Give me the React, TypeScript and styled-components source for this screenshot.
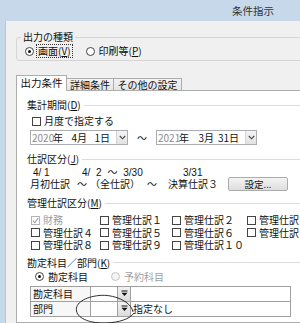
import React from 'react'
import styled, { createGlobalStyle } from 'styled-components'

const GlobalStyle = createGlobalStyle`
  * { box-sizing: border-box; }
  body { margin: 0; background: #f0f0f0; }
`

const Window = styled.div`
  position: relative;
  width: 300px;
  height: 323px;
  overflow: hidden;
  display: flex;
  flex-direction: column;
  background: #c7d8eb;
  font-family: 'Noto Sans CJK JP', 'Noto Sans', sans-serif;
  font-size: 10px;
  line-height: 12px;
  color: #111;
`
const TitleBar = styled.div`
  height: 21px;
  flex: none;
  padding: 5px 0 0 232px;
  font-size: 10.5px;
  color: #333;
`
const Body = styled.div`
  flex: 1;
  display: flex;
  min-height: 0;
`
const Frame = styled.div`
  width: 6px;
  flex: none;
  border-right: 1px solid #b5c6d8;
`
const Client = styled.div`
  flex: 1;
  min-width: 0;
  display: flex;
  flex-direction: column;
  background: #f0f0f0;
  padding: 10px 0 0 10px;
  overflow: hidden;
`
const Group = styled.fieldset`
  flex: none;
  width: 330px;
  margin: 0;
  padding: 0 0 3px 0;
  border: 1px solid #d5d5d5;
  border-radius: 3px;
`
const Legend = styled.legend`
  margin-left: 4px;
  padding: 0 2px;
  line-height: 12px;
`
const RadioRow = styled.div<{ $indent: number; $gap: number }>`
  display: flex;
  align-items: center;
  height: 12px;
  margin-top: 2px;
  padding-left: ${p => p.$indent}px;
  gap: ${p => p.$gap}px;
`
const Option = styled.label<{ $disabled?: boolean; $focus?: boolean }>`
  display: flex;
  align-items: center;
  gap: 3px;
  color: ${p => (p.$disabled ? '#a0a0a0' : '#111')};
  span.txt {
    padding: 0 1px;
    outline: ${p => (p.$focus ? '1px dotted #333' : 'none')};
  }
`
const Radio = styled.span<{ $checked?: boolean; $disabled?: boolean }>`
  width: 9px;
  height: 9px;
  flex: none;
  border-radius: 50%;
  border: 1px solid ${p => (p.$disabled ? '#c4c4c4' : '#444')};
  background: ${p => (p.$disabled ? '#f4f4f4' : '#fff')};
  display: flex;
  align-items: center;
  justify-content: center;
  &::after {
    content: '';
    width: 3px;
    height: 3px;
    border-radius: 50%;
    background: ${p => (p.$checked ? '#111' : 'transparent')};
  }
`
const U = styled.span`
  text-decoration: underline;
`
const TabRow = styled.div`
  flex: none;
  display: flex;
  align-items: flex-end;
  height: 16px;
  margin-top: 14px;
`
const Tab = styled.div<{ $active?: boolean; $w: number }>`
  width: ${p => p.$w}px;
  height: ${p => (p.$active ? 16 : 13)}px;
  border: 1px solid #acacac;
  border-bottom: none;
  margin-left: ${p => (p.$active ? 0 : -1)}px;
  text-align: center;
  line-height: ${p => (p.$active ? 14 : 12)}px;
  background: ${p => (p.$active ? '#fff' : 'linear-gradient(#f2f2f2, #e4e4e4)')};
  position: ${p => (p.$active ? 'relative' : 'static')};
  z-index: ${p => (p.$active ? 1 : 'auto')};
  font-size: ${p => (p.$active ? 10.5 : 10)}px;
`
const Panel = styled.div`
  flex: 1;
  width: 330px;
  margin-top: -1px;
  background: #fff;
  border: 1px solid #adadad;
  padding: 8px 0 0 10px;
`
const SectionHead = styled.div<{ $mt: number }>`
  display: flex;
  align-items: center;
  gap: 3px;
  height: 12px;
  margin-top: ${p => p.$mt}px;
  &::after {
    content: '';
    flex: 1;
    height: 1px;
    background: #dcdcdc;
  }
`
const CheckItem = styled.label<{ $disabled?: boolean }>`
  display: flex;
  align-items: center;
  gap: 3px;
  height: 12px;
  white-space: nowrap;
  color: ${p => (p.$disabled ? '#9a9a9a' : '#111')};
`
const Box = styled.span<{ $disabled?: boolean }>`
  width: 9px;
  height: 9px;
  flex: none;
  border: 1px solid ${p => (p.$disabled ? '#b4b4b4' : '#444')};
  background: #fff;
  display: flex;
  align-items: center;
  justify-content: center;
`
const MonthCheck = styled.div`
  margin: 4px 0 0 5px;
`
const DateRow = styled.div`
  display: flex;
  align-items: center;
  margin: 3px 0 0 3px;
  height: 15px;
`
const DateField = styled.div<{ $w: number }>`
  width: ${p => p.$w}px;
  height: 15px;
  display: flex;
  align-items: center;
  border: 1px solid #abadb3;
  background: #fff;
  padding-left: 1px;
`
const Year = styled.span`
  width: 21px;
  color: #8c8c8c;
`
const Cell = styled.span<{ $w: number }>`
  width: ${p => p.$w}px;
  text-align: right;
  white-space: nowrap;
`
const DropBtn = styled.span`
  margin-left: auto;
  width: 11px;
  height: 13px;
  border-left: 1px solid #d4d4d4;
  background: linear-gradient(#f4f4f4, #e2e2e2);
  display: flex;
  align-items: center;
  justify-content: center;
`
const Tilde = styled.span<{ $w: number }>`
  width: ${p => p.$w}px;
  text-align: center;
`
const RangeTop = styled.div`
  display: grid;
  grid-template-columns: 49px 101px auto;
  height: 9px;
  line-height: 10px;
  margin: 3px 0 0 6px;
  white-space: pre;
  font-family: 'Liberation Sans', 'Noto Sans CJK JP', sans-serif;
  font-size: 10px;
  span:nth-child(2) {
    word-spacing: 3px;
  }
`
const RangeRow = styled.div`
  display: grid;
  grid-template-columns: 47px 13px 57px 21px 60px 60px;
  align-items: center;
  height: 14px;
  margin-left: 3px;
  white-space: nowrap;
`
const Button = styled.button`
  height: 14px;
  width: 60px;
  padding: 0;
  font: inherit;
  font-size: 9.5px;
  line-height: 12px;
  color: #111;
  border: 1px solid #acacac;
  border-radius: 2px;
  background: linear-gradient(#f3f3f3, #dedede);
`
const CheckGrid = styled.div`
  display: grid;
  grid-template-columns: 69px 72px 75px 80px;
  grid-auto-rows: 12.5px;
  align-items: center;
  margin: 5px 0 0 4px;
`
const Table = styled.div`
  display: grid;
  grid-template-columns: 60px 27px 13px 160px;
  width: 261px;
  margin: 3px 0 0 3px;
  border-top: 1px solid #a0a0a0;
  border-left: 1px solid #a0a0a0;
`
const TCell = styled.div<{ $kind?: 'label' | 'input' | 'btn' }>`
  height: 15px;
  border-right: 1px solid #a0a0a0;
  border-bottom: 1px solid #a0a0a0;
  padding-left: 2px;
  display: flex;
  align-items: center;
  white-space: nowrap;
  background: ${p => (p.$kind === 'label' ? '#f7f7f7' : p.$kind === 'btn' ? 'linear-gradient(#f2f2f2, #dcdcdc)' : '#fff')};
  justify-content: ${p => (p.$kind === 'btn' ? 'center' : 'flex-start')};
  ${p => (p.$kind === 'btn' ? 'padding-left: 0;' : '')}
`
const Mark = styled.svg`
  position: absolute;
  left: 73px;
  top: 292px;
  pointer-events: none;
`

const Chevron = () => (
  <svg width="7" height="5" viewBox="0 0 7 5">
    <path d="M0.8 1 L3.5 3.8 L6.2 1" fill="none" stroke="#444" strokeWidth="1.1" />
  </svg>
)
const PickIcon = () => (
  <svg width="7" height="7" viewBox="0 0 7 7">
    <rect x="0.5" y="0.5" width="6" height="1" fill="#111" />
    <path d="M0.5 2.8 H6.5 L3.5 6 Z" fill="#111" />
  </svg>
)
const Tick = ({ color }: { color: string }) => (
  <svg width="7" height="7" viewBox="0 0 7 7">
    <path d="M0.8 3.6 L2.8 5.6 L6.2 1.2" fill="none" stroke={color} strokeWidth="1.2" />
  </svg>
)

const Check = ({ label, checked, disabled }: { label: string; checked?: boolean; disabled?: boolean }) => (
  <CheckItem $disabled={disabled}>
    <Box $disabled={disabled}>{checked && <Tick color={disabled ? '#a8a8a8' : '#222'} />}</Box>
    {label}
  </CheckItem>
)

const DateBox = ({ w, y, m, d, mw, dw }: { w: number; y: string; m: string; d: string; mw: number; dw: number }) => (
  <DateField $w={w}>
    <Year>{y}</Year>
    <span>年</span>
    <Cell $w={mw}>{m}</Cell>
    <Cell $w={dw}>{d}</Cell>
    <DropBtn>
      <Chevron />
    </DropBtn>
  </DateField>
)

const journals = ['管理仕訳１', '管理仕訳２', '管理仕訳３', '管理仕訳４', '管理仕訳５', '管理仕訳６', '管理仕訳７', '管理仕訳８', '管理仕訳９', '管理仕訳１０']

export default function App() {
  return (
    <>
      <GlobalStyle />
      <Window>
        <TitleBar>条件指示</TitleBar>
        <Body>
          <Frame />
          <Client>
            <Group>
              <Legend>出力の種類</Legend>
              <RadioRow $indent={8} $gap={14}>
                <Option $focus>
                  <Radio $checked />
                  <span className="txt">
                    画面(<U>V</U>)
                  </span>
                </Option>
                <Option>
                  <Radio />
                  <span className="txt">
                    印刷等(<U>P</U>)
                  </span>
                </Option>
              </RadioRow>
            </Group>

            <TabRow>
              <Tab $active $w={51}>出力条件</Tab>
              <Tab $w={48}>詳細条件</Tab>
              <Tab $w={69}>その他の設定</Tab>
            </TabRow>
            <Panel>
              <SectionHead $mt={0}>
                <span>
                  集計期間(<U>D</U>)
                </span>
              </SectionHead>
              <MonthCheck>
                <Check label="月度で指定する" />
              </MonthCheck>
              <DateRow>
                <DateBox w={98} y="2020" m="4月" d="1日" mw={24} dw={23} />
                <Tilde $w={28}>～</Tilde>
                <DateBox w={101} y="2021" m="3月" d="31日" mw={25} dw={25} />
              </DateRow>

              <SectionHead $mt={8}>
                <span>
                  仕訳区分(<U>J</U>)
                </span>
              </SectionHead>
              <RangeTop>
                <span>4/ 1</span>
                <span>4/ 2 ～ 3/30</span>
                <span>3/31</span>
              </RangeTop>
              <RangeRow>
                <span>月初仕訳</span>
                <span>～</span>
                <span>（全仕訳）</span>
                <span>～</span>
                <span>決算仕訳３</span>
                <Button>設定...</Button>
              </RangeRow>

              <SectionHead $mt={6}>
                <span>
                  管理仕訳区分(<U>M</U>)
                </span>
              </SectionHead>
              <CheckGrid>
                <Check label="財務" checked disabled />
                {journals.map(j => (
                  <Check key={j} label={j} />
                ))}
              </CheckGrid>

              <SectionHead $mt={5}>
                <span>
                  勘定科目／部門(<U>K</U>)
                </span>
              </SectionHead>
              <RadioRow $indent={8} $gap={22}>
                <Option>
                  <Radio $checked />
                  <span className="txt">勘定科目</span>
                </Option>
                <Option $disabled>
                  <Radio $disabled />
                  <span className="txt">予約科目</span>
                </Option>
              </RadioRow>
              <Table>
                <TCell $kind="label">勘定科目</TCell>
                <TCell $kind="input" />
                <TCell $kind="btn">
                  <PickIcon />
                </TCell>
                <TCell $kind="input" />
                <TCell $kind="label">部門</TCell>
                <TCell $kind="input" />
                <TCell $kind="btn">
                  <PickIcon />
                </TCell>
                <TCell $kind="input">指定なし</TCell>
              </Table>
            </Panel>
          </Client>
        </Body>
        <Mark width="64" height="34" viewBox="0 0 64 34">
          <path
            d="M60 20 C 58 9, 40 2, 26 3.5 C 12 5, 2 11, 3.5 19 C 5 27, 18 31.5, 33 31 C 46 30.5, 57 27, 61 21"
            fill="none"
            stroke="#1a1a1a"
            strokeWidth="0.9"
          />
        </Mark>
      </Window>
    </>
  )
}
